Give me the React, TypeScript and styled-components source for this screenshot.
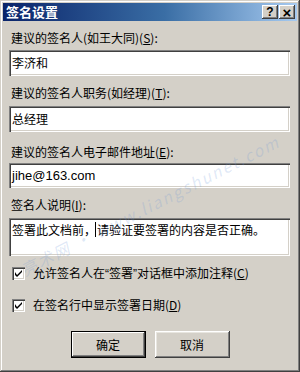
import React from 'react';
import styled, { createGlobalStyle } from 'styled-components';

const GlobalStyle = createGlobalStyle`
  html, body {
    margin: 0;
    padding: 0;
    background: #d4d0c8;
  }
  * {
    box-sizing: border-box;
  }
`;

const cjk = `"Noto Sans CJK SC", "Liberation Sans", sans-serif`;
const latin = `"Liberation Sans", "Noto Sans CJK SC", sans-serif`;

export default function App() {
  return (
    <>
      <GlobalStyle />
      <DialogWindow>
        <TitleBar>
          <TitleText>签名设置</TitleText>
          <CaptionButtons>
            <CaptionButton>?</CaptionButton>
            <CaptionButton $close>×</CaptionButton>
          </CaptionButtons>
        </TitleBar>

        <Body>
          <FieldLabel $top={9}>
            建议的签名人(如王大同)(<u>S</u>):
          </FieldLabel>
          <TextBox $top={4} $height={26}>李济和</TextBox>

          <FieldLabel $top={9}>
            建议的签名人职务(如经理)(<u>T</u>):
          </FieldLabel>
          <TextBox $top={5} $height={26}>总经理</TextBox>

          <FieldLabel $top={12}>
            建议的签名人电子邮件地址(<u>E</u>):
          </FieldLabel>
          <TextBox $top={3} $height={25} $latin>
            jihe@163.com
          </TextBox>

          <FieldLabel $top={9}>
            签名人说明(<u>I</u>):
          </FieldLabel>
          <TextBox $top={5} $height={38} $multiline>
            签署此文档前，<Caret />请验证要签署的内容是否正确。
          </TextBox>

          <CheckRow $top={9}>
            <CheckBox>
              <CheckMark />
            </CheckBox>
            <span>
              允许签名人在<Quote>“</Quote>签署<Quote>”</Quote>对话框中添加注释(<u>C</u>)
            </span>
          </CheckRow>
          <CheckRow $top={15}>
            <CheckBox>
              <CheckMark />
            </CheckBox>
            <span>
              在签名行中显示签署日期(<u>D</u>)
            </span>
          </CheckRow>

          <ButtonRow>
            <DialogButton $default>确定</DialogButton>
            <DialogButton>取消</DialogButton>
          </ButtonRow>
        </Body>

        <Watermark>亮术网 · www.liangshunet.com</Watermark>
      </DialogWindow>
    </>
  );
}

function CheckMark() {
  return (
    <svg width="7" height="7" viewBox="0 0 7 7">
      <path d="M0 2 L0 5 L2 7 L7 2 L7 0 L2 5 Z" fill="#000" />
    </svg>
  );
}

const DialogWindow = styled.div`
  position: relative;
  width: 300px;
  height: 372px;
  padding: 3px;
  background: #d4d0c8;
  overflow: hidden;
  box-shadow: inset -1px -1px #404040, inset 1px 1px #d4d0c8, inset -2px -2px #808080,
    inset 2px 2px #ffffff;
  display: flex;
  flex-direction: column;
`;

const TitleBar = styled.div`
  height: 18px;
  display: flex;
  align-items: center;
  justify-content: space-between;
  padding: 0 2px 0 3px;
  background: linear-gradient(to right, #0a246a, #3a6ea5 55%, #a6caf0);
`;

const TitleText = styled.span`
  font-family: ${cjk};
  font-size: 13px;
  font-weight: 700;
  color: #ffffff;
  line-height: 18px;
`;

const CaptionButtons = styled.div`
  display: flex;
`;

const CaptionButton = styled.div<{ $close?: boolean }>`
  width: 16px;
  height: 14px;
  margin-left: ${(p) => (p.$close ? '1px' : '0')};
  background: #d4d0c8;
  box-shadow: inset -1px -1px #404040, inset 1px 1px #ffffff, inset -2px -2px #808080;
  display: flex;
  align-items: center;
  justify-content: center;
  font-family: ${latin};
  font-weight: 700;
  font-size: ${(p) => (p.$close ? '15px' : '12px')};
  line-height: 1;
  color: #000;
`;

const Body = styled.div`
  display: flex;
  flex-direction: column;
  padding: 0 7px 0 6px;
  font-family: ${cjk};
  font-size: 12px;
  color: #000;
  flex: 1;
`;

const FieldLabel = styled.div<{ $top: number }>`
  margin-top: ${(p) => p.$top}px;
  padding-left: 2px;
  line-height: 16px;
  white-space: nowrap;
`;

const TextBox = styled.div<{ $top: number; $height: number; $latin?: boolean; $multiline?: boolean }>`
  margin-top: ${(p) => p.$top}px;
  height: ${(p) => p.$height}px;
  background: #ffffff;
  box-shadow: inset 1px 1px #808080, inset 2px 2px #404040, inset -1px -1px #ffffff,
    inset -2px -2px #d4d0c8;
  padding: ${(p) => (p.$multiline ? '4px 3px' : '0 3px')};
  display: flex;
  align-items: ${(p) => (p.$multiline ? 'flex-start' : 'center')};
  font-family: ${(p) => (p.$latin ? latin : cjk)};
  font-size: ${(p) => (p.$latin ? '13px' : '12px')};
  white-space: nowrap;
  line-height: 16px;
`;

const Caret = styled.span`
  display: inline-block;
  width: 1px;
  height: 15px;
  background: #000;
  margin: 0 1px 0 -1px;
`;

const Quote = styled.span`
  font-family: ${latin};
`;

const CheckRow = styled.div<{ $top: number }>`
  margin-top: ${(p) => p.$top}px;
  display: flex;
  align-items: center;
  gap: 8px;
  padding-left: 3px;
  line-height: 16px;
  white-space: nowrap;
`;

const CheckBox = styled.div`
  width: 13px;
  height: 13px;
  flex: none;
  background: #ffffff;
  box-shadow: inset 1px 1px #808080, inset 2px 2px #404040, inset -1px -1px #ffffff,
    inset -2px -2px #d4d0c8;
  display: flex;
  align-items: center;
  justify-content: center;
`;

const ButtonRow = styled.div`
  margin-top: 18px;
  display: flex;
  justify-content: center;
  gap: 9px;
  padding-left: 1px;
`;

const DialogButton = styled.div<{ $default?: boolean }>`
  width: 75px;
  height: 27px;
  display: flex;
  align-items: center;
  justify-content: center;
  background: #d4d0c8;
  font-family: ${cjk};
  font-size: 12px;
  border: ${(p) => (p.$default ? '1px solid #000' : '0')};
  box-shadow: ${(p) =>
    p.$default
      ? 'inset -1px -1px #404040, inset 1px 1px #ffffff, inset -2px -2px #808080'
      : 'inset -1px -1px #404040, inset 1px 1px #ffffff, inset -2px -2px #808080, inset 2px 2px #e8e6e0'};
`;

const Watermark = styled.div`
  position: absolute;
  left: 150px;
  top: 205px;
  transform: translate(-50%, -50%) rotate(-27deg);
  font-family: ${cjk};
  font-style: italic;
  font-size: 16px;
  letter-spacing: 2px;
  color: rgba(110, 150, 215, 0.22);
  white-space: nowrap;
  pointer-events: none;
`;
